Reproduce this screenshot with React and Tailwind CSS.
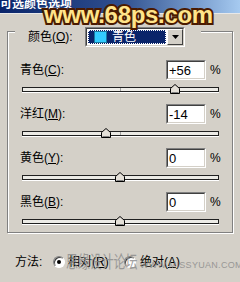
import React from "react";

const FONT = "font-['Liberation_Sans','Noto_Sans_CJK_SC',sans-serif]";

function Thumb({ x }) {
  return (
    <svg
      width="10"
      height="10"
      viewBox="0 0 10 10"
      className="absolute top-0"
      style={{ left: x - 5 }}
    >
      <polygon
        points="0.5,9.5 0.5,4.5 5,0.5 9.5,4.5 9.5,9.5"
        fill="#e4e0d8"
        stroke="#000"
        strokeWidth="1"
      />
      <line x1="1.5" y1="8.5" x2="8.5" y2="8.5" stroke="#808080" />
    </svg>
  );
}

function Slider({ value }) {
  const x = 98 + (value / 100) * 98;
  return (
    <div className="relative ml-[14px] mt-[4px] h-[10px] w-[197px]">
      <div className="absolute left-0 right-0 top-[3px] h-[5px] border border-[#202020] bg-[#ecebe6] shadow-[0_1px_0_#ffffff]">
        <div className="absolute left-[97px] top-0 h-full w-px bg-[#a0a0a0]" />
      </div>
      <Thumb x={x} />
    </div>
  );
}

function Row({ label, u, rest, value, first }) {
  return (
    <div className={first ? "" : "mt-[10px]"}>
      <div className="flex h-[20px] items-center">
        <div className="ml-[12px] w-[146px] shrink-0 whitespace-nowrap text-[12px] leading-none text-black">
          {label}(<span className="underline underline-offset-1">{u}</span>){rest}
        </div>
        <div className="h-[20px] w-[40px] shrink-0 border border-t-[#808080] border-l-[#808080] border-b-white border-r-white">
          <div className="flex h-full items-center border border-t-[#404040] border-l-[#404040] border-b-[#d4d0c8] border-r-[#d4d0c8] bg-white pl-[1px] text-[13px] leading-none text-black">
            {value}
          </div>
        </div>
        <div className="ml-[4px] text-[12px] leading-none text-black">%</div>
      </div>
    </div>
  );
}

function Radio({ checked }) {
  return (
    <div className="flex h-[12px] w-[12px] shrink-0 items-center justify-center rounded-full border border-t-[#808080] border-l-[#808080] border-b-white border-r-white bg-white shadow-[inset_1px_1px_0_#404040]">
      {checked && <div className="h-[4px] w-[4px] rounded-full bg-black" />}
    </div>
  );
}

export default function App() {
  return (
    <div className={`relative h-[282px] w-[240px] overflow-hidden bg-[#d4d0c8] ${FONT}`}>
      {/* Title bar */}
      <div className="h-[14px] overflow-hidden border-b border-[#e8e8e8] bg-gradient-to-r from-[#0a246a] via-[#2f4f8e] to-[#a6caf0]">
        <div className="-mt-[3px] whitespace-nowrap text-[12px] font-bold leading-[14px] text-white">
          可选颜色选项
        </div>
      </div>

      {/* Group box */}
      <div className="ml-[7px] mt-[17px] h-[202px] w-[226px] border border-[#808080] shadow-[1px_1px_0_#ffffff,inset_1px_1px_0_#ffffff]">
        {/* legend */}
        <div className="-mt-[5px] ml-[7px] flex h-[20px] w-[186px] items-center bg-[#d4d0c8]">
          <div className="ml-[13px] w-[57px] shrink-0 whitespace-nowrap text-[12px] leading-none text-black">
            颜色(<span className="underline underline-offset-1">O</span>):
          </div>
          <div className="flex h-[20px] w-[100px] shrink-0 border border-t-[#808080] border-l-[#808080] border-b-white border-r-white">
            <div className="flex h-full w-full border border-t-[#404040] border-l-[#404040] border-b-[#d4d0c8] border-r-[#d4d0c8] bg-white">
              <div className="m-[1px] flex min-w-0 flex-1 items-center justify-start bg-[#0a246a] outline-1 outline-dotted outline-[#ffffff] -outline-offset-1">
                <div className="ml-[6px] h-[12px] w-[13px] shrink-0 border border-[#1a7aa0] bg-[#33ccff]" />
                <div className="ml-[5px] shrink-0 whitespace-nowrap text-[12px] leading-none text-white">青色</div>
              </div>
              <div className="flex w-[16px] shrink-0 items-center justify-center border border-t-[#ffffff] border-l-[#ffffff] border-b-[#404040] border-r-[#404040] bg-[#d4d0c8]">
                <svg width="7" height="4" viewBox="0 0 7 4">
                  <polygon points="0,0 7,0 3.5,4" fill="#000" />
                </svg>
              </div>
            </div>
          </div>
        </div>

        <div className="mt-[13px]">
          <Row first label="青色" u="C" rest=":" value="+56" />
          <Slider value={56} />
          <Row label="洋红" u="M" rest=":" value="-14" />
          <Slider value={-14} />
          <Row label="黄色" u="Y" rest=":" value="0" />
          <Slider value={0} />
          <Row label="黑色" u="B" rest=":" value="0" />
          <Slider value={0} />
        </div>
      </div>

      {/* Method row */}
      <div className="ml-[15px] mt-[21px] flex h-[16px] items-center whitespace-nowrap text-[12px] leading-none text-black">
        <div className="w-[38px] shrink-0">方法:</div>
        <Radio checked />
        <div className="ml-[3px] w-[56px] shrink-0">
          相对(<span className="underline underline-offset-1">R</span>)
        </div>
        <Radio />
        <div className="ml-[4px] shrink-0">
          绝对(<span className="underline underline-offset-1">A</span>)
        </div>
      </div>

      {/* Watermark top */}
      <div className="pointer-events-none absolute left-[44px] top-[2px] whitespace-nowrap font-['Liberation_Sans',sans-serif] text-[24px] font-bold leading-[26px] tracking-[-0.3px] text-[#ffe48a] [-webkit-text-stroke:4px_#4a1a00] [paint-order:stroke_fill]">
        www.68ps.com
      </div>

      {/* Watermark bottom */}
      <div className="pointer-events-none absolute left-[66px] top-[254px] origin-left scale-x-[0.7] whitespace-nowrap text-[17px] leading-none text-[#8a8a8a] opacity-80">
        思缘设计论坛
      </div>
      <div className="pointer-events-none absolute left-[140px] top-[261px] whitespace-nowrap font-['Liberation_Sans',sans-serif] text-[9px] leading-none tracking-[0.3px] text-[#8a8a8a] opacity-80">
        WWW.MISSYUAN.COM
      </div>
    </div>
  );
}
